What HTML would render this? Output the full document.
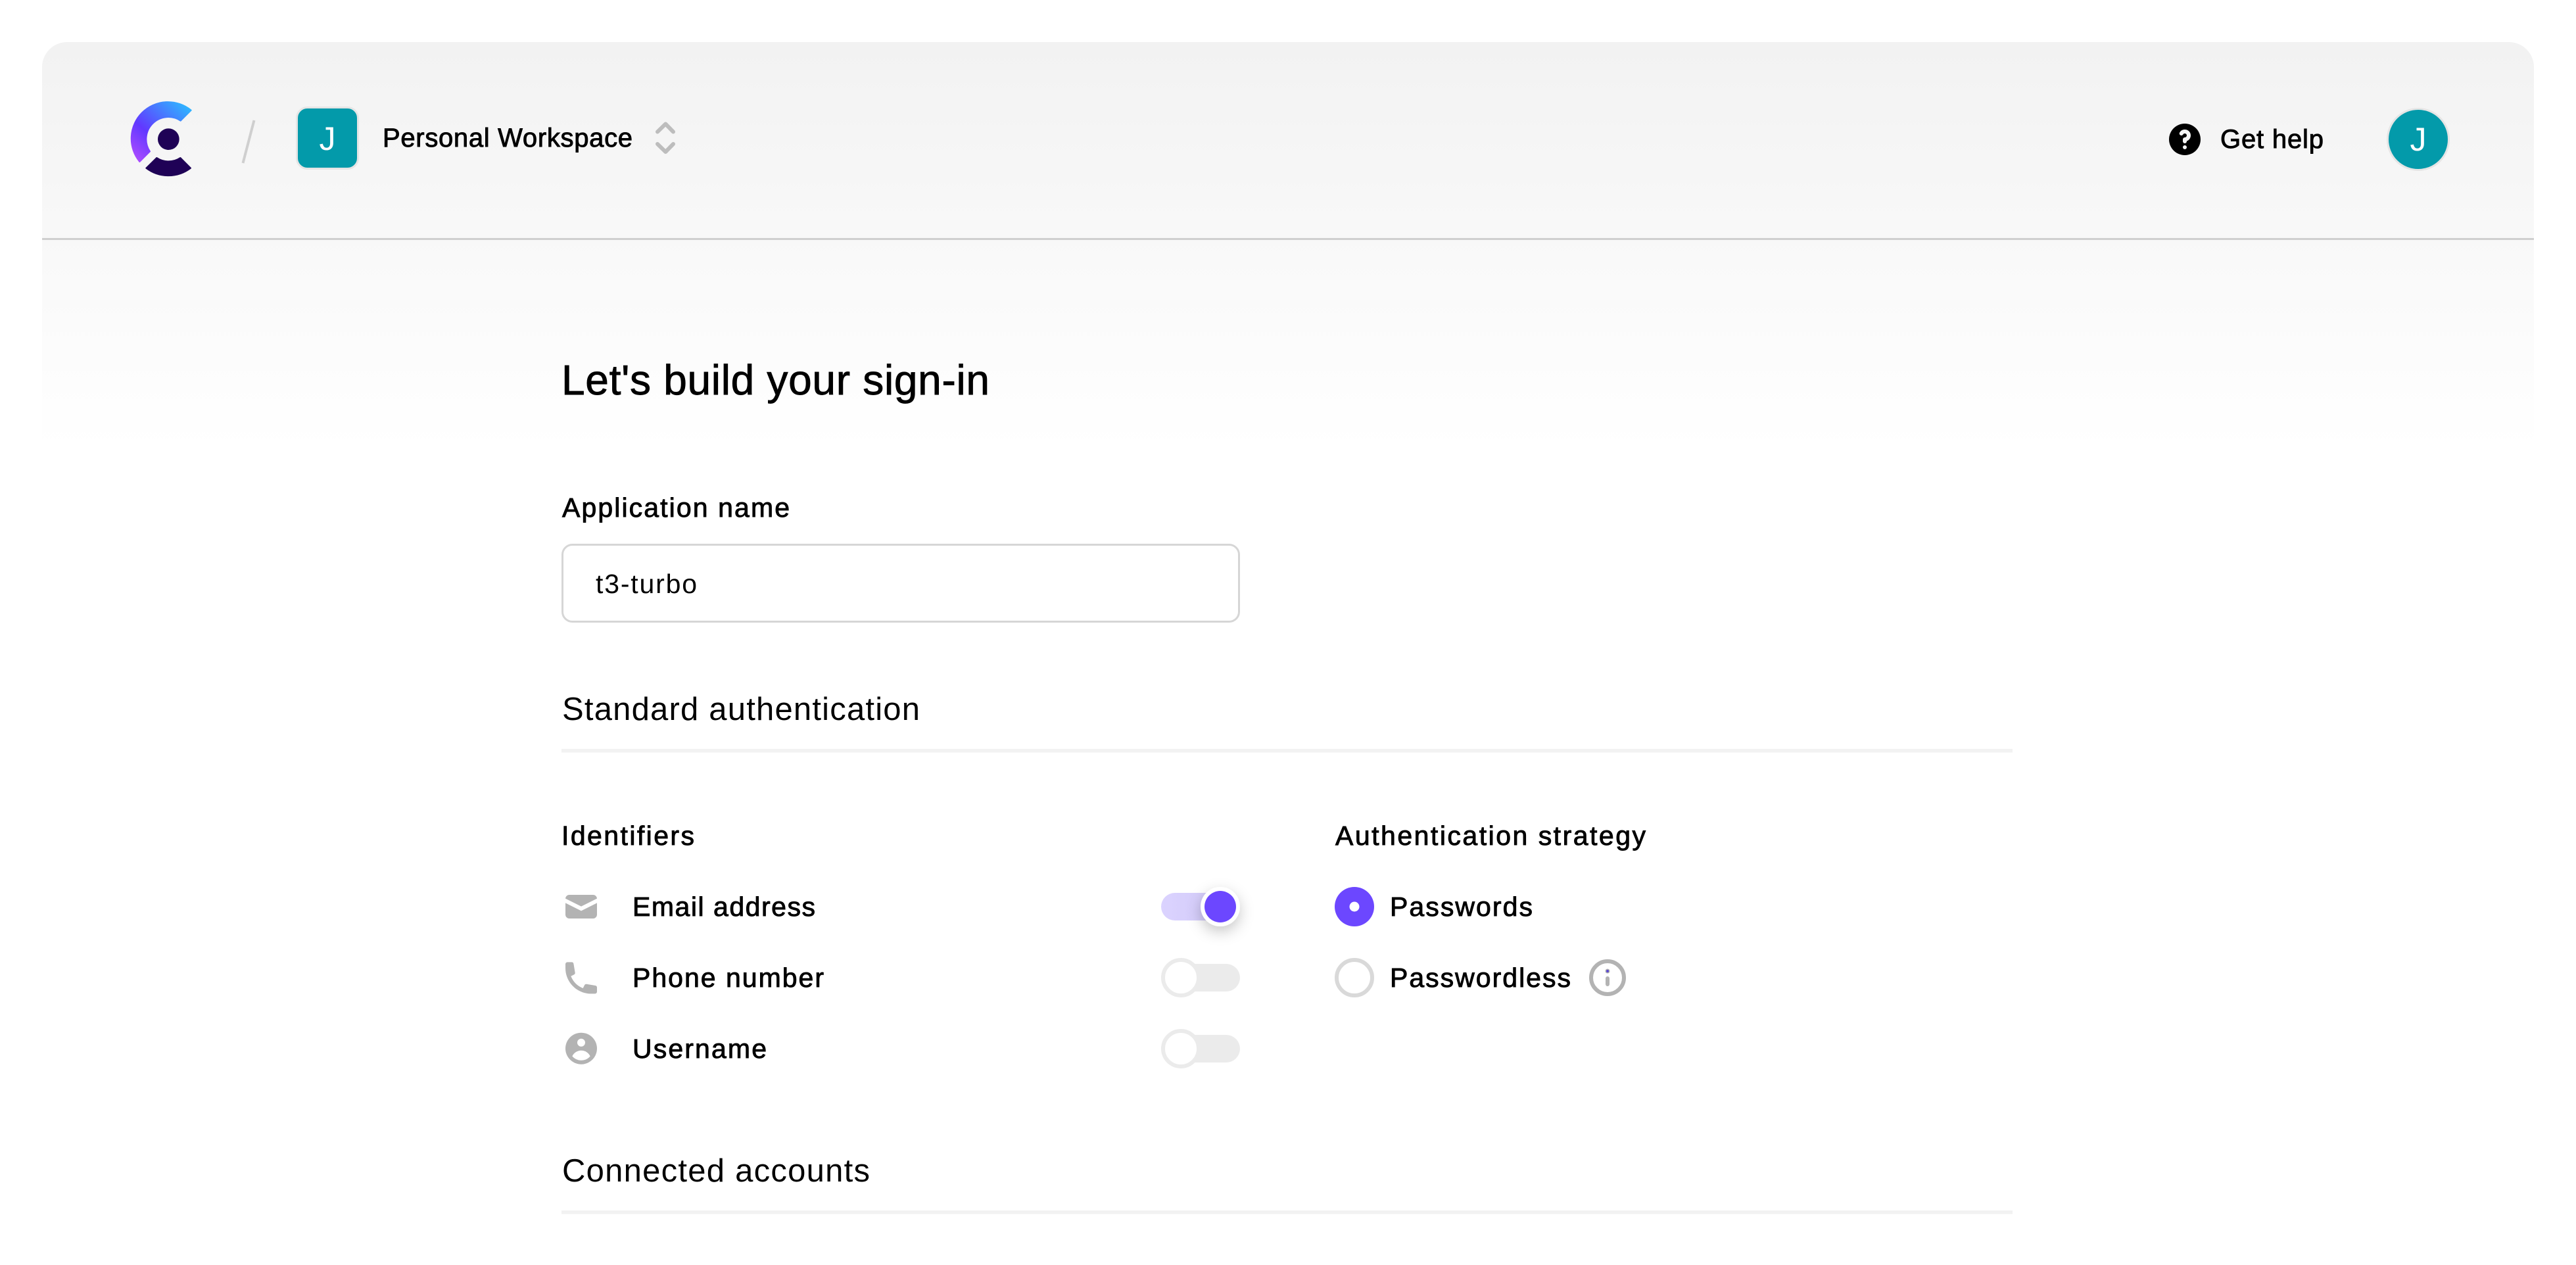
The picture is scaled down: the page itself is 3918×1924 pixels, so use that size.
<!DOCTYPE html>
<html lang="en">
<head>
<meta charset="utf-8">
<title>Let's build your sign-in</title>
<style>
html,body{margin:0;padding:0;background:#fff;width:3918px;height:1924px;overflow:hidden}
svg{display:block;position:absolute;left:0;top:0}
text{font-family:"Liberation Sans",Arial,sans-serif;fill:#000;font-size:41px}
.m{stroke:#000;stroke-width:.9px}
.ic{fill:#b3b3b3}
</style>
</head>
<body>
<svg width="3918" height="1924" viewBox="0 0 3918 1924" xmlns="http://www.w3.org/2000/svg">
<defs>
<linearGradient id="card" gradientUnits="userSpaceOnUse" x1="0" y1="64" x2="0" y2="680">
<stop offset="0" stop-color="#f2f2f2"/><stop offset="1" stop-color="#fff"/>
</linearGradient>
<linearGradient id="logo" gradientUnits="userSpaceOnUse" x1="360" y1="90" x2="120" y2="360">
<stop offset="0" stop-color="#2cbcff"/><stop offset=".62" stop-color="#6238ff"/><stop offset="1" stop-color="#b04dff"/>
</linearGradient>
<filter id="sh" x="-100%" y="-100%" width="300%" height="300%">
<feDropShadow dx="0" dy="8" stdDeviation="11" flood-color="#000" flood-opacity=".22"/>
</filter>
<linearGradient id="trk" gradientUnits="userSpaceOnUse" x1="1766" y1="0" x2="1886" y2="0">
<stop offset="0" stop-color="#dbd3ff"/><stop offset="1" stop-color="#cfc7f5"/>
</linearGradient>
</defs>

<!-- header card -->
<path d="M64 680V102A38 38 0 0 1 102 64H3816A38 38 0 0 1 3854 102V680Z" fill="url(#card)"/>
<rect x="64" y="362" width="3790" height="3" fill="#cfcfcf"/>

<!-- logo -->
<g transform="translate(170 130) scale(.3333)">
<path d="M362 113L314 161A101 101 0 0 0 174 301L127 348A167 167 0 0 1 362 113Z" fill="url(#logo)" stroke="url(#logo)" stroke-width="6" stroke-linejoin="round"/>
<circle cx="259" cy="245" r="49" fill="#1f0256"/>
<path d="M205 330A98 98 0 0 0 313 330L360 377A167 167 0 0 1 157 377Z" fill="#1f0256" stroke="#1f0256" stroke-width="6" stroke-linejoin="round"/>
</g>

<!-- slash -->
<line x1="386.500" y1="183" x2="369.500" y2="248" stroke="#cfcfcf" stroke-width="4"/>

<!-- workspace -->
<rect x="451.500" y="163.500" width="93" height="93" rx="16" fill="#039aaa" stroke="#e5e5e5" stroke-width="3"/>
<text x="498" y="228" text-anchor="middle" style="font-size:50px;fill:#fff">J</text>
<text class="m" x="582" y="223" textLength="380" lengthAdjust="spacing" style="font-size:40px">Personal Workspace</text>
<path d="M1000 200.500L1012.300 188.500L1024 200.500M1000 219L1012.300 231L1024 219" fill="none" stroke="#bdbdbd" stroke-width="6" stroke-linecap="round" stroke-linejoin="round"/>

<!-- help -->
<path transform="translate(3293 182) scale(3)" fill="#000" fill-rule="evenodd" clip-rule="evenodd" d="M18 10a8 8 0 11-16 0 8 8 0 0116 0zm-8-3a1 1 0 00-.867.5 1 1 0 11-1.731-1A3 3 0 0113 8a3.001 3.001 0 01-2 2.83V11a1 1 0 11-2 0v-1a1 1 0 011-1 1 1 0 100-2zm0 8a1 1 0 100-2 1 1 0 000 2z"/>
<text class="m" x="3377" y="225" textLength="157" lengthAdjust="spacing" style="font-size:40px">Get help</text>
<circle cx="3678" cy="212" r="46.500" fill="#039aaa" stroke="#e5e5e5" stroke-width="3"/>
<text x="3678" y="229" text-anchor="middle" style="font-size:50px;fill:#fff">J</text>

<!-- heading -->
<text class="m" x="854" y="600" textLength="651" lengthAdjust="spacing" style="font-size:64px">Let's build your sign-in</text>
<text class="m" x="855" y="786" textLength="346" lengthAdjust="spacing">Application name</text>

<!-- input -->
<rect x="855.500" y="828.500" width="1029" height="117" rx="15" fill="#fff" stroke="#d6d6d6" stroke-width="3"/>
<text x="906" y="902" textLength="154" lengthAdjust="spacing">t3-turbo</text>

<!-- standard auth -->
<text x="855" y="1095" textLength="544" lengthAdjust="spacing" style="font-size:49px">Standard authentication</text>
<rect x="854" y="1139" width="2207" height="5.500" fill="#f2f2f2"/>

<text class="m" x="854" y="1285" textLength="202" lengthAdjust="spacing">Identifiers</text>
<text class="m" x="2031" y="1285" textLength="472" lengthAdjust="spacing">Authentication strategy</text>

<!-- rows -->
<g class="ic">
<g transform="translate(854 1349) scale(3)"><path d="M2.003 5.884L10 9.882l7.997-3.998A2 2 0 0016 4H4a2 2 0 00-1.997 1.884z"/><path d="M18 8.118l-8 4-8-4V14a2 2 0 002 2h12a2 2 0 002-2V8.118z"/></g>
<path transform="translate(854 1457.400) scale(3)" d="M2 3a1 1 0 011-1h2.153a1 1 0 01.986.836l.74 4.435a1 1 0 01-.54 1.06l-1.548.773a11.037 11.037 0 006.105 6.105l.774-1.548a1 1 0 011.059-.54l4.435.74a1 1 0 01.836.986V17a1 1 0 01-1 1h-2C7.820 18 2 12.180 2 5V3z"/>
<path transform="translate(854 1564.700) scale(3)" fill-rule="evenodd" clip-rule="evenodd" d="M18 10a8 8 0 11-16 0 8 8 0 0116 0zm-6-3a2 2 0 11-4 0 2 2 0 014 0zm-2 4a5 5 0 00-4.546 2.916A5.986 5.986 0 0010 16a5.986 5.986 0 004.546-2.084A5 5 0 0010 11z"/>
</g>
<text class="m" x="962" y="1393" textLength="278" lengthAdjust="spacing">Email address</text>
<text class="m" x="962" y="1501" textLength="291" lengthAdjust="spacing">Phone number</text>
<text class="m" x="962" y="1609" textLength="204" lengthAdjust="spacing">Username</text>

<!-- toggles -->
<rect x="1766" y="1358" width="120" height="42" rx="21" fill="url(#trk)"/>
<circle cx="1856" cy="1379" r="30" fill="#fff" filter="url(#sh)"/>
<circle cx="1856" cy="1379" r="24" fill="#6c47ff"/>

<rect x="1766" y="1466" width="120" height="42" rx="21" fill="#ebebeb"/>
<circle cx="1796" cy="1487" r="27" fill="#fff" stroke="#ebebeb" stroke-width="6"/>

<rect x="1766" y="1574" width="120" height="42" rx="21" fill="#ebebeb"/>
<circle cx="1796" cy="1595" r="27" fill="#fff" stroke="#ebebeb" stroke-width="6"/>

<!-- radios -->
<circle cx="2060" cy="1379" r="30" fill="#6c47ff"/>
<circle cx="2060" cy="1379" r="7.500" fill="#fff"/>
<circle cx="2060" cy="1487" r="27" fill="#fff" stroke="#d9d9d9" stroke-width="6"/>
<text class="m" x="2114" y="1393" textLength="217" lengthAdjust="spacing">Passwords</text>
<text class="m" x="2114" y="1501" textLength="275" lengthAdjust="spacing">Passwordless</text>

<!-- info -->
<circle cx="2445" cy="1487" r="25" fill="none" stroke="#b3b3b3" stroke-width="6"/>
<line x1="2445" y1="1488" x2="2445" y2="1497" stroke="#b3b3b3" stroke-width="6" stroke-linecap="round"/>
<circle cx="2445" cy="1477" r="3.500" fill="#b3b3b3"/>
<circle cx="2445" cy="1477" r="2" fill="#5a49d0"/>

<!-- connected -->
<text x="855" y="1797" textLength="468" lengthAdjust="spacing" style="font-size:49px">Connected accounts</text>
<rect x="854" y="1841" width="2207" height="5.500" fill="#f2f2f2"/>
</svg>
</body>
</html>
